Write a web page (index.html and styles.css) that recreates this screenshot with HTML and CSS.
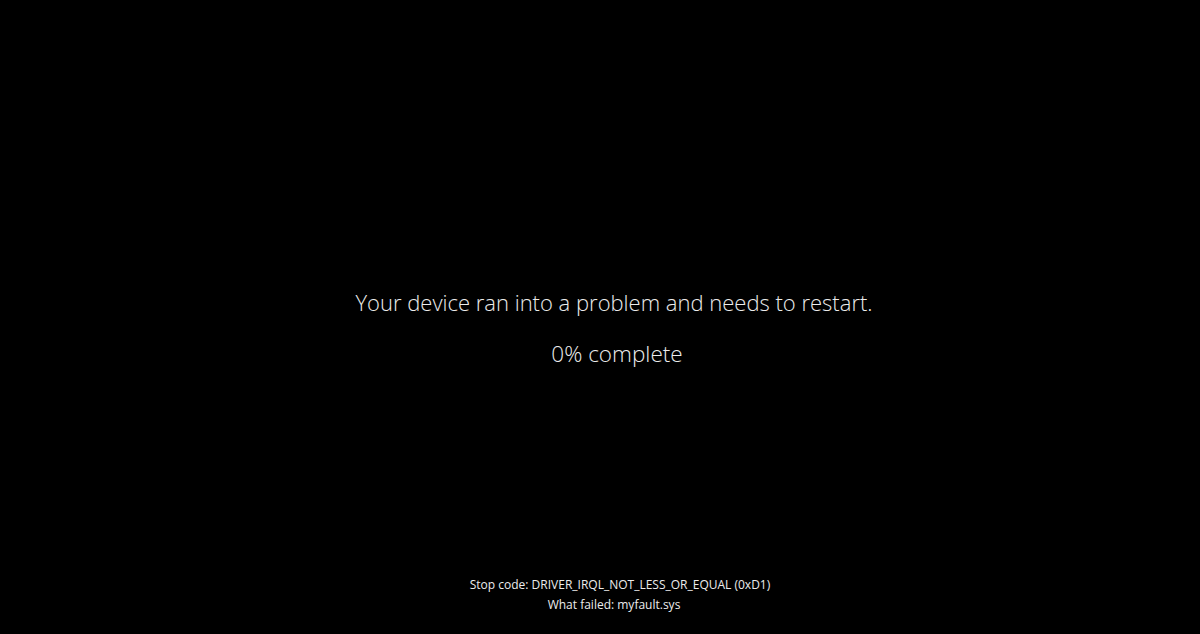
FILE: index.html
```html
<!DOCTYPE html>
<html lang="en">
<head>
<meta charset="utf-8">
<link rel="stylesheet" href="styles.css">
</head>
<body>
<div class="screen">
  <div class="message">
    <p class="headline">Your device ran into a problem and needs to restart.</p>
    <p class="progress">0% complete</p>
  </div>
  <div class="details">
    <p class="detail">Stop code: DRIVER_IRQL_NOT_LESS_OR_EQUAL (0xD1)</p>
    <p class="detail">What failed: myfault.sys</p>
  </div>
</div>
</body>
</html>
```
FILE: styles.css
```css
html, body {
  margin: 0;
  padding: 0;
  background: #000;
}
.screen {
  width: 1200px;
  height: 634px;
  display: flex;
  flex-direction: column;
  align-items: center;
  color: #ececec;
  font-family: "Open Sans", "Noto Sans", sans-serif;
  font-weight: 300;
  box-sizing: border-box;
  padding: 286px 0 19px 28px;
}
.message {
  display: flex;
  flex-direction: column;
  align-items: center;
  gap: 20px;
  flex: 1;
}
p { margin: 0; }
.headline {
  font-size: 22px;
  line-height: 32px;
}
.progress {
  font-size: 22.5px;
  line-height: 32px;
  margin-left: 6px;
}
.details {
  display: flex;
  flex-direction: column;
  align-items: center;
}
.detail {
  font-size: 12px;
  line-height: 20px;
  font-weight: 400;
}
.detail:first-child {
  margin-left: 12px;
}
```
